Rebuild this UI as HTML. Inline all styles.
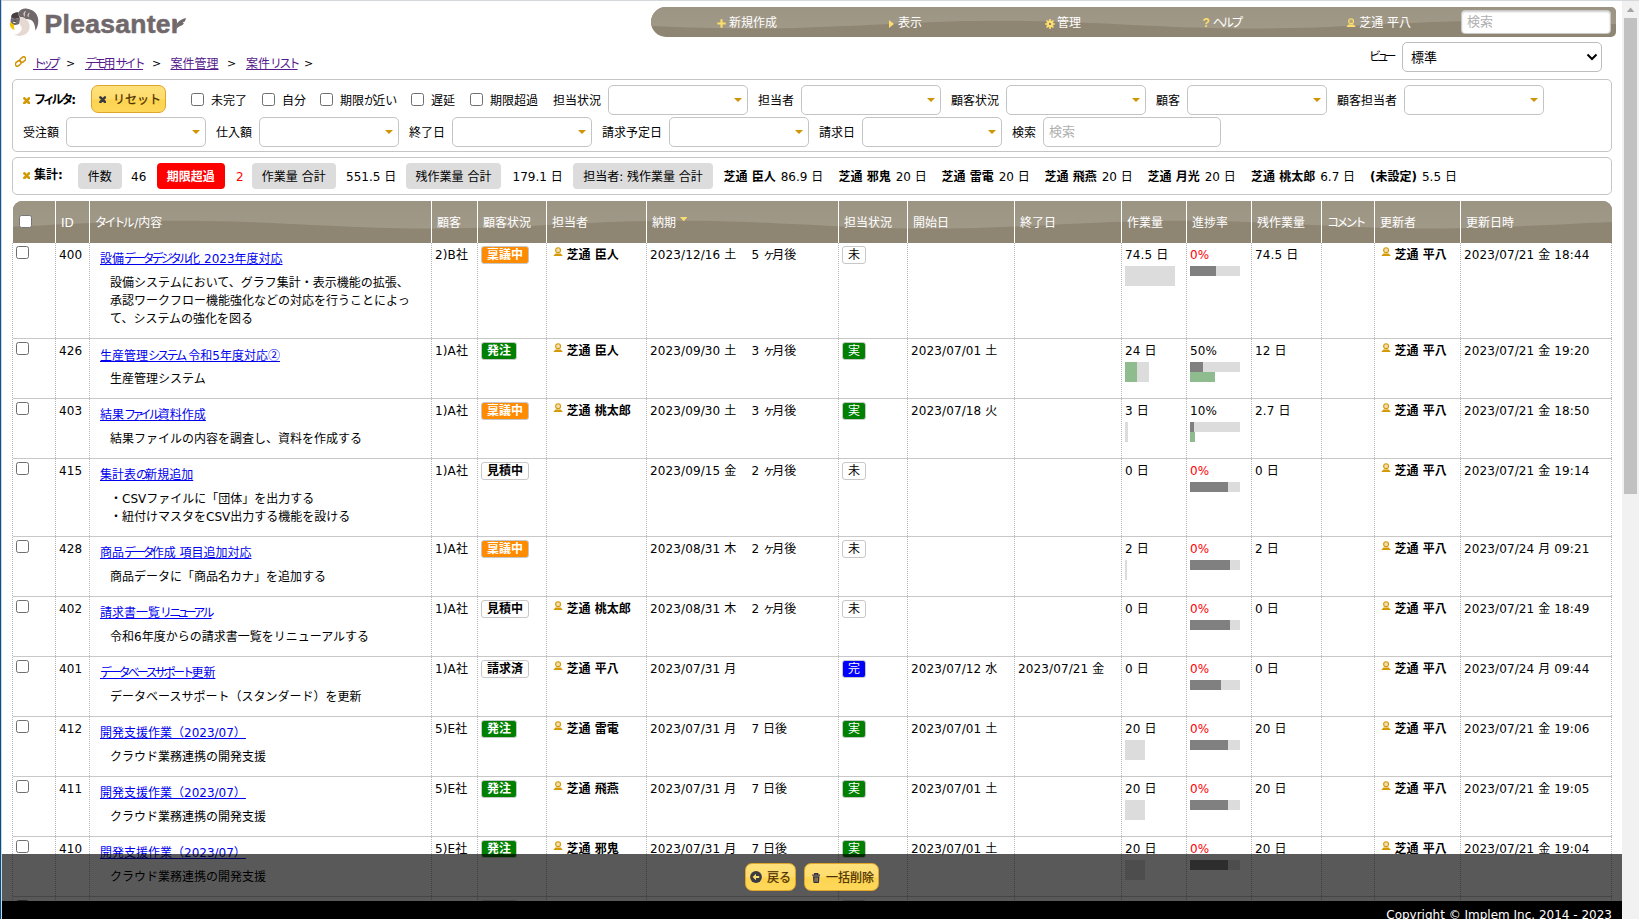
<!DOCTYPE html>
<html lang="ja"><head><meta charset="utf-8"><title>案件リスト - Pleasanter</title>
<style>
html,body{margin:0;padding:0;}
body{width:1639px;height:919px;overflow:hidden;position:relative;background:#fff;color:#000;
 font-family:"DejaVu Sans","Noto Sans CJK JP",sans-serif;font-size:12px;line-height:16px;}
.k{letter-spacing:-2.8px;}
b{font-weight:bold;}
.edge-l1{z-index:6;position:absolute;left:0;top:0;width:1px;height:919px;background:linear-gradient(#31507c,#17486b);}
.edge-l2{z-index:6;position:absolute;left:1px;top:0;width:1px;height:919px;background:#b9dcfa;}
.edge-t{position:absolute;left:2px;top:0;width:1637px;z-index:5;height:1px;background:#d6d9dc;}
#logo{position:absolute;left:0;top:0;height:44px;width:210px;}
#logo .bird{position:absolute;left:4px;top:4px;}
#logo .lt{position:absolute;left:44.6px;top:7px;font:bold 26.5px/34px "Liberation Sans",sans-serif;color:#70686b;letter-spacing:0.27px;-webkit-text-stroke:0.55px #70686b;white-space:nowrap;}
#logo .lt .r{display:inline-block;width:6px;overflow:hidden;vertical-align:bottom;}
#logo .leaf{position:absolute;left:175px;top:17px;}
#nav{position:absolute;left:651px;top:7px;width:965px;height:30px;background:#8e8573;border-radius:15px 5px 5px 15px;overflow:hidden;color:#fff;}
#nav .wave{position:absolute;left:0;top:0;}
.ni{position:absolute;top:8px;white-space:nowrap;line-height:16px;}
.ni svg{vertical-align:-1px;}
.ni .q{color:#fbde6b;font:bold 12px "Liberation Sans",sans-serif;margin-right:3px;}
.sbox{position:absolute;left:810px;top:3px;width:148px;height:22px;border:1px solid #c8c8c8;border-radius:4px;background:#fff;box-shadow:inset 0 1px 2px rgba(0,0,0,.2);}
.ph{color:#b0b0b0;font-size:13px;position:absolute;left:5px;top:3px;}
#bc{position:absolute;left:0;top:55px;height:18px;width:700px;}
#bc .lk{position:absolute;left:15px;top:0.5px;}
.bl{position:absolute;top:1px;color:#551a8b;text-decoration:underline;white-space:nowrap;}
.gt{position:absolute;top:1px;font-size:11px;}
#view{position:absolute;left:1360px;top:42px;height:30px;width:250px;}
#view .vl{position:absolute;left:9px;top:7px;white-space:nowrap;}
#view .vs{position:absolute;left:42px;top:0;width:198px;height:28px;border:1px solid #bdbdbd;border-radius:5px;background:#fff;}
#view .vt{position:absolute;left:8px;top:7px;font-size:13px;}
#view .vs svg{position:absolute;right:3.5px;top:10px;}
#filter{position:absolute;left:12px;top:79px;width:1598px;height:71px;border:1px solid #c5c5c5;border-radius:5px;background:#fff;}
#agg{position:absolute;left:12px;top:157px;width:1598px;height:36px;border:1px solid #c5c5c5;border-radius:5px;background:#fff;}
#filter>*,#agg>*{position:absolute;white-space:nowrap;}
#filter,#agg{--o:1px;}
.fh b{margin-left:3.5px;}
b .k{letter-spacing:-2.1px;}
b .s{letter-spacing:-3.6px;margin-left:-0.8px;}
.xi{vertical-align:0;}
.btn{position:absolute;box-sizing:border-box;border:1px solid #dfa428;border-radius:7px;background:linear-gradient(to bottom,#fee17c 0,#fedc6c 48%,#fdd450 54%,#fed85c 100%);color:#4c3000;}
.btn .bx{position:absolute;}
.btn .bt{position:absolute;left:21px;top:6px;white-space:nowrap;}
.cb{position:absolute;box-sizing:border-box;width:13px;height:13px;border:1px solid #6e6e6e;border-radius:2.5px;background:#fff;}
.fl{color:#000;}
.dd{box-sizing:border-box;width:140px;height:30px;border:1px solid #c4c4c4;border-radius:5px;background:#fff;}
.dd i{position:absolute;right:5px;top:12px;width:0;height:0;border-left:4px solid transparent;border-right:4px solid transparent;border-top:4.5px solid #d19405;}
.dd .ph{left:5px;top:6px;}
.ab{top:5px;height:26px;line-height:28px;text-align:center;background:#dcdcdc;border-radius:4px;}
.ab.red{background:#ff0000;color:#fff;font-weight:bold;}
.at{top:11px;}
.redt{color:#ff0000;}
#grid{position:absolute;left:13px;top:201px;width:1599px;height:718px;}
.gh{position:absolute;left:0;top:0;width:1599px;height:42px;background:#8e8573;border-radius:9px 9px 0 0;overflow:hidden;color:#fff;}
.gh .wave{position:absolute;left:0;top:0;}
.hc{position:absolute;top:0;height:42px;box-sizing:border-box;border-left:1px solid #fff;}
.hc:first-of-type{border-left:0;}
.ht{position:absolute;left:5px;top:14px;white-space:nowrap;}
.hcb{left:6px;top:14px;border-color:#767676;}
.sort{margin-left:4px;vertical-align:5.5px;}
.gr{position:absolute;left:0;width:1599px;box-sizing:border-box;border-bottom:1px solid #c8c8c8;}
.gc{position:absolute;top:0;bottom:0;box-sizing:border-box;border-left:1px dotted #b4b4b4;white-space:nowrap;}
.gc.last{border-right:1px dotted #b4b4b4;}
.ct{position:absolute;left:3px;top:4px;letter-spacing:0.12px;}
.rcb{left:3px;top:3px;}
.tl{position:absolute;left:10px;top:8px;color:#0000ee;text-decoration:underline;}
.md{position:absolute;left:20px;top:31px;font-family:"DejaVu Sans","Noto Sans CJK JP",sans-serif;line-height:18px;color:#000;}
.sb{position:absolute;left:3px;top:3px;box-sizing:border-box;height:18px;line-height:16px;padding:0 5px;border:1px solid #c8c8c8;border-radius:3px;font-weight:bold;background:#fff;}
.sb.orange{background:#ff8c00;color:#fff;}
.sb.green{background:#008000;color:#fff;}
.sb.blue{background:#0000ff;color:#fff;}
.pi{position:absolute;left:6px;top:3.6px;}
.ow{position:absolute;left:19.5px;top:4px;}
.rel{position:absolute;left:104.5px;top:4px;}
.wb{position:absolute;left:3px;top:23px;height:20px;background:#dcdcdc;}
.wb i{position:absolute;left:0;top:0;height:20px;background:#8fbc8f;}
.pb{position:absolute;left:3px;top:23px;width:50px;height:10px;background:#dcdcdc;}
.pb i{position:absolute;left:0;top:0;height:10px;background:#808080;}
.pg{position:absolute;left:3px;top:33px;height:10px;background:#8fbc8f;}
#cmd{position:absolute;left:0;top:854px;width:1622px;height:47px;background:rgba(0,0,0,.65);}
#cmd .btn{position:absolute;box-sizing:border-box;border:1px solid #dfa428;border-radius:7px;background:linear-gradient(to bottom,#fee17c 0,#fedc6c 48%,#fdd450 54%,#fed85c 100%);color:#4c3000;}
#foot{position:absolute;left:0;top:901px;width:1622px;height:18px;background:#000;color:#fff;}
#foot span{position:absolute;right:10px;top:6px;white-space:nowrap;font-size:12px;}
#sbar{position:absolute;left:1622px;top:0;width:17px;height:919px;background:#f1f1f1;}
#sbar .thumb{position:absolute;left:2px;top:18px;width:13px;height:476px;background:#c1c1c1;}

.sb.st{font-weight:normal;}
.btn .bt .k,.md .k{letter-spacing:0;}
.sl{margin-left:2.5px;}
.s{letter-spacing:-4.6px;margin-left:-1.2px;}
.btn .bt .s,.md .s{letter-spacing:0;margin-left:0;}
.btn .bt{-webkit-text-stroke:0.25px #4c3000;}
.cj{font-family:"Noto Sans CJK JP",sans-serif;}

</style></head>
<body>
<div class="edge-l1"></div><div class="edge-l2"></div><div class="edge-t"></div>
<div id="logo"><svg class="bird" viewBox="4 4 42 38" width="42" height="38">
<path d="M18.5 12.5 C20 9.5 23 8.3 26 8.5 C33 9 38.5 14 38.3 21 C38.2 25 37 28.5 35.4 30.5 C35.2 27 34.5 24.5 33.5 22.5 C32.5 20.8 31 19.7 29.5 19.5 C27.5 19.2 26 19.5 24.5 18.5 C23 17.5 21.5 16.8 20 17 C19 15.5 18.3 14 18.5 12.5 Z" fill="#70686b"/>
<path d="M11.2 17.5 C10.8 14.5 13.5 12 18.6 12.2 C18.3 14 18.6 16 19.8 17.5 C17 19.2 13 19.5 11.2 17.5 Z" fill="#4a4044"/>
<path d="M11.2 17.8 C13.5 19.3 17 19 19.7 17.2 C20.2 19 20 21 19.4 23.6 C18.5 24.7 16 25.2 13.5 24.7 C12 23.7 10.8 22.6 10.5 21.5 C10.5 20 10.8 19 11.2 17.8 Z" fill="#6f686c"/>
<path d="M20.3 17 C23 16.5 26.5 18.5 28.5 22 C30.5 26 30 30.5 26.5 33.5 C23 36.3 18 36.5 14 34.8 C17.5 34.5 20.5 32.8 21.6 29.5 C22.5 26.5 20 25.5 19.3 23.5 C19.9 21 20 19 20.3 17 Z" fill="#e5d9d1"/>
<path d="M10.3 22 C11.5 23.5 12.8 24.3 14.3 24.8 C13.6 26.3 13.8 28 14.8 29.6 C13 29.8 11.5 28.8 10.6 27 C9.6 25.2 9.5 23.5 10.3 22 Z" fill="#f2c300"/>
<ellipse cx="14.4" cy="22.4" rx="1.4" ry="0.65" fill="#f5eaa5"/><circle cx="15.2" cy="21.2" r="0.8" fill="#3d3850"/>
<path d="M26 10.8 C23 11.8 22.6 15.4 25 16.8 C24.6 14.8 24.9 12.6 26 10.8 Z M30 12.4 C27.2 13.3 26.8 16 28.6 17.4 C28.5 15.6 28.9 13.9 30 12.4 Z" fill="#d9cdc7"/>
</svg><span class="lt">Pleasante<span class="r">r</span></span><svg class="leaf" viewBox="0 0 12 13" width="12" height="13"><path d="M1.2 7.6 C2.6 4.8 5.6 2.3 11 0.9 C10.7 2.6 10.2 3.9 9.5 4.8 L7.5 5.5 L8.9 6.3 C8 7.8 7 8.6 5.5 9.1 C3.5 9.8 1.9 11 1.2 13 Z" fill="#70686b"/></svg></div>
<div id="nav"><svg class="wave" viewBox="0 0 965 30" preserveAspectRatio="none" width="965" height="30"><defs><filter id="bl965" x="-1%" y="-20%" width="102%" height="140%"><feGaussianBlur stdDeviation="0 0.6"/></filter><linearGradient id="lg965" x1="0" y1="0" x2="0" y2="1"><stop offset="0" stop-color="#9c9483"/><stop offset="1" stop-color="#a19988"/></linearGradient></defs><path filter="url(#bl965)" d="M0 -3 H965 L965 17.1 L962 16.9 L949 16.3 L936 15.7 L923 15.2 L910 14.7 L897 14.3 L884 14.0 L871 13.8 L858 13.7 L845 13.7 L832 13.8 L819 14.0 L806 14.3 L793 14.7 L780 15.1 L767 15.7 L754 16.2 L741 16.8 L728 17.5 L715 18.1 L702 18.7 L689 19.3 L676 19.9 L663 20.4 L650 20.8 L637 21.1 L624 21.3 L611 21.5 L598 21.5 L585 21.4 L572 21.3 L559 21.0 L546 20.6 L533 20.2 L520 19.7 L507 19.1 L494 18.5 L481 17.9 L468 17.2 L455 16.6 L442 16.0 L429 15.4 L416 14.9 L403 14.5 L390 14.2 L377 13.9 L364 13.8 L351 13.7 L338 13.7 L325 13.9 L312 14.1 L299 14.5 L286 14.9 L273 15.4 L260 16.0 L247 16.6 L234 17.2 L221 17.8 L208 18.5 L195 19.1 L182 19.6 L169 20.1 L156 20.6 L143 21.0 L130 21.2 L117 21.4 L104 21.5 L91 21.5 L78 21.3 L65 21.1 L52 20.8 L39 20.4 L26 19.9 L13 19.4 L0 18.8 Z" fill="url(#lg965)"/></svg>
<span class="ni" style="left:66px"><svg viewBox="0 0 9 9" width="9" height="9" style="margin-right:3px;vertical-align:-1px"><path d="M4.5 0.3 V8.7 M0.3 4.5 H8.7" stroke="#fbde6b" stroke-width="2.1"/></svg>新規作成</span>
<span class="ni" style="left:238px"><svg viewBox="0 0 5 8" width="5" height="8" style="margin-right:4px"><path d="M0 0 L5 4 L0 8 Z" fill="#fbde6b"/></svg>表示</span>
<span class="ni" style="left:394px"><svg viewBox="0 0 10 10" width="10" height="10" style="margin-right:2px;vertical-align:-1.5px"><path fill-rule="evenodd" d="M9.89 4.23 L9.89 5.77 L8.40 5.82 L7.98 6.83 L9.00 7.91 L7.91 9.00 L6.83 7.98 L5.82 8.40 L5.77 9.89 L4.23 9.89 L4.18 8.40 L3.17 7.98 L2.09 9.00 L1.00 7.91 L2.02 6.83 L1.60 5.82 L0.11 5.77 L0.11 4.23 L1.60 4.18 L2.02 3.17 L1.00 2.09 L2.09 1.00 L3.17 2.02 L4.18 1.60 L4.23 0.11 L5.77 0.11 L5.82 1.60 L6.83 2.02 L7.91 1.00 L9.00 2.09 L7.98 3.17 L8.40 4.18 Z M4 4 H6 V6 H4 Z" fill="#fbde6b"/></svg>管理</span>
<span class="ni" style="left:551.5px"><b class="q">?</b><span class="k">ヘルプ</span></span>
<span class="ni" style="left:695px"><svg viewBox="0 0 10.2 9.4" width="10.2" height="9.4" style="margin-right:3px;vertical-align:0px"><circle cx="5.1" cy="3.2" r="2.45" fill="#b7a77d" stroke="#fbde6b" stroke-width="1.1"/><path d="M0 9.4 L2.4 6.5 L7.8 6.5 L10.2 9.4 Z" fill="#fbde6b"/></svg>芝通 平八</span>
<span class="sbox"><span class="ph">検索</span></span></div>
<div id="bc"><svg class="lk" viewBox="0 0 11 11" width="11" height="11"><g transform="rotate(-40 5.5 5.5)" fill="none" stroke="#d19405" stroke-width="1.5"><rect x="-0.6" y="3.5" width="6.2" height="4" rx="2"/><rect x="5.4" y="3.5" width="6.2" height="4" rx="2"/></g></svg><a class="bl" style="left:33px"><span class="k">ト<span class="s">ッ</span>プ</span></a><a class="bl" style="left:85px"><span class="k">デモ</span>用<span class="k">サイト</span></a><a class="bl" style="left:170.5px">案件管理</a><a class="bl" style="left:246px">案件<span class="k">リスト</span></a><span class="gt" style="left:66px">&gt;</span><span class="gt" style="left:152px">&gt;</span><span class="gt" style="left:227px">&gt;</span><span class="gt" style="left:304px">&gt;</span></div>
<div id="view"><span class="vl"><span class="k">ビ<span class="s">ュ</span>ー</span></span><span class="vs"><span class="vt">標準</span><svg viewBox="0 0 12 8" width="12" height="8"><path d="M1.5 1.5 L6 6 L10.5 1.5" fill="none" stroke="#000" stroke-width="2"/></svg></span></div>
<div id="filter">
<span class="fh" style="left:10px;top:12px"><svg class="xi" viewBox="0 0 7.4 7.4" width="7.4" height="7.4"><path d="M1.4 1.4 L6 6 M6 1.4 L1.4 6" stroke="#d39a08" stroke-width="2.7" stroke-linecap="round" fill="none"/></svg><b><span class="k">フ<span class="s">ィ</span>ルタ</span>:</b></span>
<span class="btn" style="left:78px;top:5px;width:75px;height:28px"><svg viewBox="0 0 7.4 7.4" width="7.4" height="7.4" class="bx" style="left:7px;top:9.5px"><path d="M1.4 1.4 L6 6 M6 1.4 L1.4 6" stroke="#3a3a42" stroke-width="2.5" stroke-linecap="round" fill="none"/></svg><span class="bt"><span class="k">リセ<span class="s">ッ</span>ト</span></span></span>
<span class="cb" style="left:178px;top:13px"></span><span class="fl" style="left:198px;top:13px">未完了</span>
<span class="cb" style="left:249px;top:13px"></span><span class="fl" style="left:269px;top:13px">自分</span>
<span class="cb" style="left:307px;top:13px"></span><span class="fl" style="left:327px;top:13px">期限<span class="k">が</span>近<span class="k">い</span></span>
<span class="cb" style="left:398px;top:13px"></span><span class="fl" style="left:418px;top:13px">遅延</span>
<span class="cb" style="left:457px;top:13px"></span><span class="fl" style="left:477px;top:13px">期限超過</span>
<span class="fl" style="left:540px;top:13px">担当状況</span><span class="dd" style="left:595px;top:5px"><i></i></span>
<span class="fl" style="left:745px;top:13px">担当者</span><span class="dd" style="left:788px;top:5px"><i></i></span>
<span class="fl" style="left:938px;top:13px">顧客状況</span><span class="dd" style="left:993px;top:5px"><i></i></span>
<span class="fl" style="left:1143px;top:13px">顧客</span><span class="dd" style="left:1174px;top:5px"><i></i></span>
<span class="fl" style="left:1324px;top:13px">顧客担当者</span><span class="dd" style="left:1391px;top:5px"><i></i></span>
<span class="fl" style="left:10px;top:45px">受注額</span><span class="dd" style="left:53px;top:37px"><i></i></span>
<span class="fl" style="left:203px;top:45px">仕入額</span><span class="dd" style="left:246px;top:37px"><i></i></span>
<span class="fl" style="left:396px;top:45px">終了日</span><span class="dd" style="left:439px;top:37px"><i></i></span>
<span class="fl" style="left:589px;top:45px">請求予定日</span><span class="dd" style="left:656px;top:37px"><i></i></span>
<span class="fl" style="left:806px;top:45px">請求日</span><span class="dd" style="left:849px;top:37px"><i></i></span>
<span class="fl" style="left:999px;top:45px">検索</span><span class="dd tx" style="left:1030px;top:37px;width:178px"><span class="ph">検索</span></span>
</div>
<div id="agg">
<span class="fh" style="left:10px;top:9px"><svg class="xi" viewBox="0 0 7.4 7.4" width="7.4" height="7.4"><path d="M1.4 1.4 L6 6 M6 1.4 L1.4 6" stroke="#d39a08" stroke-width="2.7" stroke-linecap="round" fill="none"/></svg><b>集計:</b></span>
<span class="ab " style="left:65px;width:43.5px">件数</span>
<span class="at " style="left:118px">46</span>
<span class="ab red" style="left:144px;width:67.5px">期限超過</span>
<span class="at redt" style="left:223px">2</span>
<span class="ab " style="left:239px;width:83.5px">作業量 合計</span>
<span class="at " style="left:333px">551.5 日</span>
<span class="ab " style="left:393px;width:95px">残作業量 合計</span>
<span class="at " style="left:499.5px">179.1 日</span>
<span class="ab " style="left:560px;width:140px">担当者: 残作業量 合計</span>
<span class="at " style="left:710.5px"><b>芝通 臣人</b><span style="margin-left:5px">86.9 日</span></span>
<span class="at " style="left:825.5px"><b>芝通 邪鬼</b><span style="margin-left:5px">20 日</span></span>
<span class="at " style="left:928.5px"><b>芝通 雷電</b><span style="margin-left:5px">20 日</span></span>
<span class="at " style="left:1031.5px"><b>芝通 飛燕</b><span style="margin-left:5px">20 日</span></span>
<span class="at " style="left:1134.5px"><b>芝通 月光</b><span style="margin-left:5px">20 日</span></span>
<span class="at " style="left:1238px"><b>芝通 桃太郎</b><span style="margin-left:5px">6.7 日</span></span>
<span class="at " style="left:1357px"><b>(未設定)</b><span style="margin-left:5px">5.5 日</span></span>
</div>
<div id="grid">
<div class="gh"><svg class="wave" viewBox="0 0 1599 42" preserveAspectRatio="none" width="1599" height="42"><defs><filter id="bl1599" x="-1%" y="-20%" width="102%" height="140%"><feGaussianBlur stdDeviation="0 0.6"/></filter><linearGradient id="lg1599" x1="0" y1="0" x2="0" y2="1"><stop offset="0" stop-color="#9c9483"/><stop offset="1" stop-color="#a19988"/></linearGradient></defs><path filter="url(#bl1599)" d="M0 -3 H1599 L1599 21.1 L1586 21.6 L1573 22.1 L1560 22.7 L1547 23.4 L1534 24.0 L1521 24.6 L1508 25.2 L1495 25.8 L1482 26.3 L1469 26.7 L1456 27.1 L1443 27.3 L1430 27.5 L1417 27.5 L1404 27.4 L1391 27.3 L1378 27.0 L1365 26.7 L1352 26.3 L1339 25.8 L1326 25.2 L1313 24.6 L1300 24.0 L1287 23.3 L1274 22.7 L1261 22.1 L1248 21.5 L1235 21.0 L1222 20.6 L1209 20.2 L1196 19.9 L1183 19.8 L1170 19.7 L1157 19.7 L1144 19.9 L1131 20.1 L1118 20.4 L1105 20.8 L1092 21.3 L1079 21.9 L1066 22.5 L1053 23.1 L1040 23.7 L1027 24.4 L1014 25.0 L1001 25.5 L988 26.1 L975 26.5 L962 26.9 L949 27.2 L936 27.4 L923 27.5 L910 27.5 L897 27.4 L884 27.2 L871 26.9 L858 26.5 L845 26.0 L832 25.5 L819 24.9 L806 24.3 L793 23.6 L780 23.0 L767 22.4 L754 21.8 L741 21.2 L728 20.8 L715 20.4 L702 20.1 L689 19.8 L676 19.7 L663 19.7 L650 19.8 L637 20.0 L624 20.3 L611 20.6 L598 21.1 L585 21.6 L572 22.2 L559 22.8 L546 23.4 L533 24.1 L520 24.7 L507 25.3 L494 25.8 L481 26.3 L468 26.7 L455 27.1 L442 27.3 L429 27.5 L416 27.5 L403 27.4 L390 27.3 L377 27.0 L364 26.7 L351 26.2 L338 25.7 L325 25.1 L312 24.5 L299 23.9 L286 23.3 L273 22.7 L260 22.1 L247 21.5 L234 21.0 L221 20.5 L208 20.2 L195 19.9 L182 19.8 L169 19.7 L156 19.7 L143 19.9 L130 20.1 L117 20.5 L104 20.9 L91 21.4 L78 21.9 L65 22.5 L52 23.1 L39 23.8 L26 24.4 L13 25.0 L0 25.6 Z" fill="url(#lg1599)"/></svg>
<span class="hc" style="left:0;width:42px"><span class="cb hcb"></span></span>
<span class="hc" style="left:42px;width:34px"><span class="ht">ID</span></span>
<span class="hc" style="left:76px;width:342px"><span class="ht"><span class="k">タイトル</span><span class="sl">/</span>内容</span></span>
<span class="hc" style="left:418px;width:46px"><span class="ht">顧客</span></span>
<span class="hc" style="left:464px;width:69px"><span class="ht">顧客状況</span></span>
<span class="hc" style="left:533px;width:100px"><span class="ht">担当者</span></span>
<span class="hc" style="left:633px;width:192px"><span class="ht">納期<svg viewBox="0 0 7.4 4.2" width="7.4" height="4.2" class="sort"><path d="M0 0 H7.4 L3.7 4.2 Z" fill="#fbde6b"/></svg></span></span>
<span class="hc" style="left:825px;width:69px"><span class="ht">担当状況</span></span>
<span class="hc" style="left:894px;width:107px"><span class="ht">開始日</span></span>
<span class="hc" style="left:1001px;width:107px"><span class="ht">終了日</span></span>
<span class="hc" style="left:1108px;width:65px"><span class="ht">作業量</span></span>
<span class="hc" style="left:1173px;width:65px"><span class="ht">進捗率</span></span>
<span class="hc" style="left:1238px;width:70px"><span class="ht">残作業量</span></span>
<span class="hc" style="left:1308px;width:53px"><span class="ht"><span class="k">コメント</span></span></span>
<span class="hc" style="left:1361px;width:86px"><span class="ht">更新者</span></span>
<span class="hc" style="left:1447px;width:152px"><span class="ht">更新日時</span></span>
</div>
<div class="gr" style="top:42px;height:96px">
<div class="gc " style="left:-1px;width:43px;padding-left:1px"><span class="cb rcb"></span></div>
<div class="gc " style="left:42px;width:34px"><span class="ct">400</span></div>
<div class="gc " style="left:76px;width:342px"><a class="tl">設備<span class="k">データデジタル</span>化 2023年度対応</a><div class="md"><div>設備システムにおいて、グラフ集計・表示機能の拡張、</div><div>承認ワークフロー機能強化などの対応を行うことによっ</div><div>て、システムの強化を図る</div></div></div>
<div class="gc " style="left:418px;width:46px"><span class="ct">2)B社</span></div>
<div class="gc " style="left:464px;width:69px"><span class="sb orange">稟議中</span></div>
<div class="gc " style="left:533px;width:100px"><svg class="pi" viewBox="0 0 10.2 9.4" width="10.2" height="9.4"><circle cx="5.1" cy="3.2" r="2.45" fill="#f3deb0" stroke="#d49a05" stroke-width="1.1"/><path d="M0 9.4 L2.4 6.5 L7.8 6.5 L10.2 9.4 Z" fill="#d49a05"/></svg><b class="ow">芝通 臣人</b></div>
<div class="gc " style="left:633px;width:192px"><span class="ct">2023/12/16 土</span><span class="rel">5 <span class="k">ヶ</span>月後</span></div>
<div class="gc " style="left:825px;width:69px"><span class="sb st white">未</span></div>
<div class="gc " style="left:894px;width:107px"><span class="ct"></span></div>
<div class="gc " style="left:1001px;width:107px"><span class="ct"></span></div>
<div class="gc " style="left:1108px;width:65px"><span class="ct">74.5 日</span><span class="wb" style="width:50px"><i style="width:0px"></i></span></div>
<div class="gc " style="left:1173px;width:65px"><span class="ct redt">0%</span><span class="pb"><i style="width:26px"></i></span></div>
<div class="gc " style="left:1238px;width:70px"><span class="ct">74.5 日</span></div>
<div class="gc " style="left:1308px;width:53px"></div>
<div class="gc " style="left:1361px;width:86px"><svg class="pi" viewBox="0 0 10.2 9.4" width="10.2" height="9.4"><circle cx="5.1" cy="3.2" r="2.45" fill="#f3deb0" stroke="#d49a05" stroke-width="1.1"/><path d="M0 9.4 L2.4 6.5 L7.8 6.5 L10.2 9.4 Z" fill="#d49a05"/></svg><b class="ow">芝通 平八</b></div>
<div class="gc last" style="left:1447px;width:152px"><span class="ct">2023/07/21 金 18:44</span></div>
</div>
<div class="gr" style="top:138px;height:60px">
<div class="gc " style="left:-1px;width:43px;padding-left:1px"><span class="cb rcb"></span></div>
<div class="gc " style="left:42px;width:34px"><span class="ct">426</span></div>
<div class="gc " style="left:76px;width:342px"><a class="tl">生産管理<span class="k">システム</span> 令和5年度対応<span class="cj">②</span></a><div class="md"><div>生産管理システム</div></div></div>
<div class="gc " style="left:418px;width:46px"><span class="ct">1)A社</span></div>
<div class="gc " style="left:464px;width:69px"><span class="sb green">発注</span></div>
<div class="gc " style="left:533px;width:100px"><svg class="pi" viewBox="0 0 10.2 9.4" width="10.2" height="9.4"><circle cx="5.1" cy="3.2" r="2.45" fill="#f3deb0" stroke="#d49a05" stroke-width="1.1"/><path d="M0 9.4 L2.4 6.5 L7.8 6.5 L10.2 9.4 Z" fill="#d49a05"/></svg><b class="ow">芝通 臣人</b></div>
<div class="gc " style="left:633px;width:192px"><span class="ct">2023/09/30 土</span><span class="rel">3 <span class="k">ヶ</span>月後</span></div>
<div class="gc " style="left:825px;width:69px"><span class="sb st green">実</span></div>
<div class="gc " style="left:894px;width:107px"><span class="ct">2023/07/01 土</span></div>
<div class="gc " style="left:1001px;width:107px"><span class="ct"></span></div>
<div class="gc " style="left:1108px;width:65px"><span class="ct">24 日</span><span class="wb" style="width:24px"><i style="width:12px"></i></span></div>
<div class="gc " style="left:1173px;width:65px"><span class="ct ">50%</span><span class="pb"><i style="width:13px"></i></span><span class="pg" style="width:25px"></span></div>
<div class="gc " style="left:1238px;width:70px"><span class="ct">12 日</span></div>
<div class="gc " style="left:1308px;width:53px"></div>
<div class="gc " style="left:1361px;width:86px"><svg class="pi" viewBox="0 0 10.2 9.4" width="10.2" height="9.4"><circle cx="5.1" cy="3.2" r="2.45" fill="#f3deb0" stroke="#d49a05" stroke-width="1.1"/><path d="M0 9.4 L2.4 6.5 L7.8 6.5 L10.2 9.4 Z" fill="#d49a05"/></svg><b class="ow">芝通 平八</b></div>
<div class="gc last" style="left:1447px;width:152px"><span class="ct">2023/07/21 金 19:20</span></div>
</div>
<div class="gr" style="top:198px;height:60px">
<div class="gc " style="left:-1px;width:43px;padding-left:1px"><span class="cb rcb"></span></div>
<div class="gc " style="left:42px;width:34px"><span class="ct">403</span></div>
<div class="gc " style="left:76px;width:342px"><a class="tl">結果<span class="k">フ<span class="s">ァ</span>イル</span>資料作成</a><div class="md"><div>結果ファイルの内容を調査し、資料を作成する</div></div></div>
<div class="gc " style="left:418px;width:46px"><span class="ct">1)A社</span></div>
<div class="gc " style="left:464px;width:69px"><span class="sb orange">稟議中</span></div>
<div class="gc " style="left:533px;width:100px"><svg class="pi" viewBox="0 0 10.2 9.4" width="10.2" height="9.4"><circle cx="5.1" cy="3.2" r="2.45" fill="#f3deb0" stroke="#d49a05" stroke-width="1.1"/><path d="M0 9.4 L2.4 6.5 L7.8 6.5 L10.2 9.4 Z" fill="#d49a05"/></svg><b class="ow">芝通 桃太郎</b></div>
<div class="gc " style="left:633px;width:192px"><span class="ct">2023/09/30 土</span><span class="rel">3 <span class="k">ヶ</span>月後</span></div>
<div class="gc " style="left:825px;width:69px"><span class="sb st green">実</span></div>
<div class="gc " style="left:894px;width:107px"><span class="ct">2023/07/18 火</span></div>
<div class="gc " style="left:1001px;width:107px"><span class="ct"></span></div>
<div class="gc " style="left:1108px;width:65px"><span class="ct">3 日</span><span class="wb" style="width:3px"><i style="width:0px"></i></span></div>
<div class="gc " style="left:1173px;width:65px"><span class="ct ">10%</span><span class="pb"><i style="width:4px"></i></span><span class="pg" style="width:5px"></span></div>
<div class="gc " style="left:1238px;width:70px"><span class="ct">2.7 日</span></div>
<div class="gc " style="left:1308px;width:53px"></div>
<div class="gc " style="left:1361px;width:86px"><svg class="pi" viewBox="0 0 10.2 9.4" width="10.2" height="9.4"><circle cx="5.1" cy="3.2" r="2.45" fill="#f3deb0" stroke="#d49a05" stroke-width="1.1"/><path d="M0 9.4 L2.4 6.5 L7.8 6.5 L10.2 9.4 Z" fill="#d49a05"/></svg><b class="ow">芝通 平八</b></div>
<div class="gc last" style="left:1447px;width:152px"><span class="ct">2023/07/21 金 18:50</span></div>
</div>
<div class="gr" style="top:258px;height:78px">
<div class="gc " style="left:-1px;width:43px;padding-left:1px"><span class="cb rcb"></span></div>
<div class="gc " style="left:42px;width:34px"><span class="ct">415</span></div>
<div class="gc " style="left:76px;width:342px"><a class="tl">集計表<span class="k">の</span>新規追加</a><div class="md"><div>・CSVファイルに「団体」を出力する</div><div>・紐付けマスタをCSV出力する機能を設ける</div></div></div>
<div class="gc " style="left:418px;width:46px"><span class="ct">1)A社</span></div>
<div class="gc " style="left:464px;width:69px"><span class="sb white">見積中</span></div>
<div class="gc " style="left:533px;width:100px"></div>
<div class="gc " style="left:633px;width:192px"><span class="ct">2023/09/15 金</span><span class="rel">2 <span class="k">ヶ</span>月後</span></div>
<div class="gc " style="left:825px;width:69px"><span class="sb st white">未</span></div>
<div class="gc " style="left:894px;width:107px"><span class="ct"></span></div>
<div class="gc " style="left:1001px;width:107px"><span class="ct"></span></div>
<div class="gc " style="left:1108px;width:65px"><span class="ct">0 日</span></div>
<div class="gc " style="left:1173px;width:65px"><span class="ct redt">0%</span><span class="pb"><i style="width:38px"></i></span></div>
<div class="gc " style="left:1238px;width:70px"><span class="ct">0 日</span></div>
<div class="gc " style="left:1308px;width:53px"></div>
<div class="gc " style="left:1361px;width:86px"><svg class="pi" viewBox="0 0 10.2 9.4" width="10.2" height="9.4"><circle cx="5.1" cy="3.2" r="2.45" fill="#f3deb0" stroke="#d49a05" stroke-width="1.1"/><path d="M0 9.4 L2.4 6.5 L7.8 6.5 L10.2 9.4 Z" fill="#d49a05"/></svg><b class="ow">芝通 平八</b></div>
<div class="gc last" style="left:1447px;width:152px"><span class="ct">2023/07/21 金 19:14</span></div>
</div>
<div class="gr" style="top:336px;height:60px">
<div class="gc " style="left:-1px;width:43px;padding-left:1px"><span class="cb rcb"></span></div>
<div class="gc " style="left:42px;width:34px"><span class="ct">428</span></div>
<div class="gc " style="left:76px;width:342px"><a class="tl">商品<span class="k">データ</span>作成 項目追加対応</a><div class="md"><div>商品データに「商品名カナ」を追加する</div></div></div>
<div class="gc " style="left:418px;width:46px"><span class="ct">1)A社</span></div>
<div class="gc " style="left:464px;width:69px"><span class="sb orange">稟議中</span></div>
<div class="gc " style="left:533px;width:100px"></div>
<div class="gc " style="left:633px;width:192px"><span class="ct">2023/08/31 木</span><span class="rel">2 <span class="k">ヶ</span>月後</span></div>
<div class="gc " style="left:825px;width:69px"><span class="sb st white">未</span></div>
<div class="gc " style="left:894px;width:107px"><span class="ct"></span></div>
<div class="gc " style="left:1001px;width:107px"><span class="ct"></span></div>
<div class="gc " style="left:1108px;width:65px"><span class="ct">2 日</span><span class="wb" style="width:2px"><i style="width:0px"></i></span></div>
<div class="gc " style="left:1173px;width:65px"><span class="ct redt">0%</span><span class="pb"><i style="width:40px"></i></span></div>
<div class="gc " style="left:1238px;width:70px"><span class="ct">2 日</span></div>
<div class="gc " style="left:1308px;width:53px"></div>
<div class="gc " style="left:1361px;width:86px"><svg class="pi" viewBox="0 0 10.2 9.4" width="10.2" height="9.4"><circle cx="5.1" cy="3.2" r="2.45" fill="#f3deb0" stroke="#d49a05" stroke-width="1.1"/><path d="M0 9.4 L2.4 6.5 L7.8 6.5 L10.2 9.4 Z" fill="#d49a05"/></svg><b class="ow">芝通 平八</b></div>
<div class="gc last" style="left:1447px;width:152px"><span class="ct">2023/07/24 月 09:21</span></div>
</div>
<div class="gr" style="top:396px;height:60px">
<div class="gc " style="left:-1px;width:43px;padding-left:1px"><span class="cb rcb"></span></div>
<div class="gc " style="left:42px;width:34px"><span class="ct">402</span></div>
<div class="gc " style="left:76px;width:342px"><a class="tl">請求書一覧<span class="k">リニ<span class="s">ュ</span>ーアル</span></a><div class="md"><div>令和6年度からの請求書一覧をリニューアルする</div></div></div>
<div class="gc " style="left:418px;width:46px"><span class="ct">1)A社</span></div>
<div class="gc " style="left:464px;width:69px"><span class="sb white">見積中</span></div>
<div class="gc " style="left:533px;width:100px"><svg class="pi" viewBox="0 0 10.2 9.4" width="10.2" height="9.4"><circle cx="5.1" cy="3.2" r="2.45" fill="#f3deb0" stroke="#d49a05" stroke-width="1.1"/><path d="M0 9.4 L2.4 6.5 L7.8 6.5 L10.2 9.4 Z" fill="#d49a05"/></svg><b class="ow">芝通 桃太郎</b></div>
<div class="gc " style="left:633px;width:192px"><span class="ct">2023/08/31 木</span><span class="rel">2 <span class="k">ヶ</span>月後</span></div>
<div class="gc " style="left:825px;width:69px"><span class="sb st white">未</span></div>
<div class="gc " style="left:894px;width:107px"><span class="ct"></span></div>
<div class="gc " style="left:1001px;width:107px"><span class="ct"></span></div>
<div class="gc " style="left:1108px;width:65px"><span class="ct">0 日</span></div>
<div class="gc " style="left:1173px;width:65px"><span class="ct redt">0%</span><span class="pb"><i style="width:40px"></i></span></div>
<div class="gc " style="left:1238px;width:70px"><span class="ct">0 日</span></div>
<div class="gc " style="left:1308px;width:53px"></div>
<div class="gc " style="left:1361px;width:86px"><svg class="pi" viewBox="0 0 10.2 9.4" width="10.2" height="9.4"><circle cx="5.1" cy="3.2" r="2.45" fill="#f3deb0" stroke="#d49a05" stroke-width="1.1"/><path d="M0 9.4 L2.4 6.5 L7.8 6.5 L10.2 9.4 Z" fill="#d49a05"/></svg><b class="ow">芝通 平八</b></div>
<div class="gc last" style="left:1447px;width:152px"><span class="ct">2023/07/21 金 18:49</span></div>
</div>
<div class="gr" style="top:456px;height:60px">
<div class="gc " style="left:-1px;width:43px;padding-left:1px"><span class="cb rcb"></span></div>
<div class="gc " style="left:42px;width:34px"><span class="ct">401</span></div>
<div class="gc " style="left:76px;width:342px"><a class="tl"><span class="k">データベースサポート</span>更新</a><div class="md"><div>データベースサポート（スタンダード）を更新</div></div></div>
<div class="gc " style="left:418px;width:46px"><span class="ct">1)A社</span></div>
<div class="gc " style="left:464px;width:69px"><span class="sb white">請求済</span></div>
<div class="gc " style="left:533px;width:100px"><svg class="pi" viewBox="0 0 10.2 9.4" width="10.2" height="9.4"><circle cx="5.1" cy="3.2" r="2.45" fill="#f3deb0" stroke="#d49a05" stroke-width="1.1"/><path d="M0 9.4 L2.4 6.5 L7.8 6.5 L10.2 9.4 Z" fill="#d49a05"/></svg><b class="ow">芝通 平八</b></div>
<div class="gc " style="left:633px;width:192px"><span class="ct">2023/07/31 月</span></div>
<div class="gc " style="left:825px;width:69px"><span class="sb st blue">完</span></div>
<div class="gc " style="left:894px;width:107px"><span class="ct">2023/07/12 水</span></div>
<div class="gc " style="left:1001px;width:107px"><span class="ct">2023/07/21 金</span></div>
<div class="gc " style="left:1108px;width:65px"><span class="ct">0 日</span></div>
<div class="gc " style="left:1173px;width:65px"><span class="ct redt">0%</span><span class="pb"><i style="width:31px"></i></span></div>
<div class="gc " style="left:1238px;width:70px"><span class="ct">0 日</span></div>
<div class="gc " style="left:1308px;width:53px"></div>
<div class="gc " style="left:1361px;width:86px"><svg class="pi" viewBox="0 0 10.2 9.4" width="10.2" height="9.4"><circle cx="5.1" cy="3.2" r="2.45" fill="#f3deb0" stroke="#d49a05" stroke-width="1.1"/><path d="M0 9.4 L2.4 6.5 L7.8 6.5 L10.2 9.4 Z" fill="#d49a05"/></svg><b class="ow">芝通 平八</b></div>
<div class="gc last" style="left:1447px;width:152px"><span class="ct">2023/07/24 月 09:44</span></div>
</div>
<div class="gr" style="top:516px;height:60px">
<div class="gc " style="left:-1px;width:43px;padding-left:1px"><span class="cb rcb"></span></div>
<div class="gc " style="left:42px;width:34px"><span class="ct">412</span></div>
<div class="gc " style="left:76px;width:342px"><a class="tl">開発支援作業（2023/07）</a><div class="md"><div>クラウド業務連携の開発支援</div></div></div>
<div class="gc " style="left:418px;width:46px"><span class="ct">5)E社</span></div>
<div class="gc " style="left:464px;width:69px"><span class="sb green">発注</span></div>
<div class="gc " style="left:533px;width:100px"><svg class="pi" viewBox="0 0 10.2 9.4" width="10.2" height="9.4"><circle cx="5.1" cy="3.2" r="2.45" fill="#f3deb0" stroke="#d49a05" stroke-width="1.1"/><path d="M0 9.4 L2.4 6.5 L7.8 6.5 L10.2 9.4 Z" fill="#d49a05"/></svg><b class="ow">芝通 雷電</b></div>
<div class="gc " style="left:633px;width:192px"><span class="ct">2023/07/31 月</span><span class="rel">7 日後</span></div>
<div class="gc " style="left:825px;width:69px"><span class="sb st green">実</span></div>
<div class="gc " style="left:894px;width:107px"><span class="ct">2023/07/01 土</span></div>
<div class="gc " style="left:1001px;width:107px"><span class="ct"></span></div>
<div class="gc " style="left:1108px;width:65px"><span class="ct">20 日</span><span class="wb" style="width:20px"><i style="width:0px"></i></span></div>
<div class="gc " style="left:1173px;width:65px"><span class="ct redt">0%</span><span class="pb"><i style="width:38px"></i></span></div>
<div class="gc " style="left:1238px;width:70px"><span class="ct">20 日</span></div>
<div class="gc " style="left:1308px;width:53px"></div>
<div class="gc " style="left:1361px;width:86px"><svg class="pi" viewBox="0 0 10.2 9.4" width="10.2" height="9.4"><circle cx="5.1" cy="3.2" r="2.45" fill="#f3deb0" stroke="#d49a05" stroke-width="1.1"/><path d="M0 9.4 L2.4 6.5 L7.8 6.5 L10.2 9.4 Z" fill="#d49a05"/></svg><b class="ow">芝通 平八</b></div>
<div class="gc last" style="left:1447px;width:152px"><span class="ct">2023/07/21 金 19:06</span></div>
</div>
<div class="gr" style="top:576px;height:60px">
<div class="gc " style="left:-1px;width:43px;padding-left:1px"><span class="cb rcb"></span></div>
<div class="gc " style="left:42px;width:34px"><span class="ct">411</span></div>
<div class="gc " style="left:76px;width:342px"><a class="tl">開発支援作業（2023/07）</a><div class="md"><div>クラウド業務連携の開発支援</div></div></div>
<div class="gc " style="left:418px;width:46px"><span class="ct">5)E社</span></div>
<div class="gc " style="left:464px;width:69px"><span class="sb green">発注</span></div>
<div class="gc " style="left:533px;width:100px"><svg class="pi" viewBox="0 0 10.2 9.4" width="10.2" height="9.4"><circle cx="5.1" cy="3.2" r="2.45" fill="#f3deb0" stroke="#d49a05" stroke-width="1.1"/><path d="M0 9.4 L2.4 6.5 L7.8 6.5 L10.2 9.4 Z" fill="#d49a05"/></svg><b class="ow">芝通 飛燕</b></div>
<div class="gc " style="left:633px;width:192px"><span class="ct">2023/07/31 月</span><span class="rel">7 日後</span></div>
<div class="gc " style="left:825px;width:69px"><span class="sb st green">実</span></div>
<div class="gc " style="left:894px;width:107px"><span class="ct">2023/07/01 土</span></div>
<div class="gc " style="left:1001px;width:107px"><span class="ct"></span></div>
<div class="gc " style="left:1108px;width:65px"><span class="ct">20 日</span><span class="wb" style="width:20px"><i style="width:0px"></i></span></div>
<div class="gc " style="left:1173px;width:65px"><span class="ct redt">0%</span><span class="pb"><i style="width:38px"></i></span></div>
<div class="gc " style="left:1238px;width:70px"><span class="ct">20 日</span></div>
<div class="gc " style="left:1308px;width:53px"></div>
<div class="gc " style="left:1361px;width:86px"><svg class="pi" viewBox="0 0 10.2 9.4" width="10.2" height="9.4"><circle cx="5.1" cy="3.2" r="2.45" fill="#f3deb0" stroke="#d49a05" stroke-width="1.1"/><path d="M0 9.4 L2.4 6.5 L7.8 6.5 L10.2 9.4 Z" fill="#d49a05"/></svg><b class="ow">芝通 平八</b></div>
<div class="gc last" style="left:1447px;width:152px"><span class="ct">2023/07/21 金 19:05</span></div>
</div>
<div class="gr" style="top:636px;height:60px">
<div class="gc " style="left:-1px;width:43px;padding-left:1px"><span class="cb rcb"></span></div>
<div class="gc " style="left:42px;width:34px"><span class="ct">410</span></div>
<div class="gc " style="left:76px;width:342px"><a class="tl">開発支援作業（2023/07）</a><div class="md"><div>クラウド業務連携の開発支援</div></div></div>
<div class="gc " style="left:418px;width:46px"><span class="ct">5)E社</span></div>
<div class="gc " style="left:464px;width:69px"><span class="sb green">発注</span></div>
<div class="gc " style="left:533px;width:100px"><svg class="pi" viewBox="0 0 10.2 9.4" width="10.2" height="9.4"><circle cx="5.1" cy="3.2" r="2.45" fill="#f3deb0" stroke="#d49a05" stroke-width="1.1"/><path d="M0 9.4 L2.4 6.5 L7.8 6.5 L10.2 9.4 Z" fill="#d49a05"/></svg><b class="ow">芝通 邪鬼</b></div>
<div class="gc " style="left:633px;width:192px"><span class="ct">2023/07/31 月</span><span class="rel">7 日後</span></div>
<div class="gc " style="left:825px;width:69px"><span class="sb st green">実</span></div>
<div class="gc " style="left:894px;width:107px"><span class="ct">2023/07/01 土</span></div>
<div class="gc " style="left:1001px;width:107px"><span class="ct"></span></div>
<div class="gc " style="left:1108px;width:65px"><span class="ct">20 日</span><span class="wb" style="width:20px"><i style="width:0px"></i></span></div>
<div class="gc " style="left:1173px;width:65px"><span class="ct redt">0%</span><span class="pb"><i style="width:38px"></i></span></div>
<div class="gc " style="left:1238px;width:70px"><span class="ct">20 日</span></div>
<div class="gc " style="left:1308px;width:53px"></div>
<div class="gc " style="left:1361px;width:86px"><svg class="pi" viewBox="0 0 10.2 9.4" width="10.2" height="9.4"><circle cx="5.1" cy="3.2" r="2.45" fill="#f3deb0" stroke="#d49a05" stroke-width="1.1"/><path d="M0 9.4 L2.4 6.5 L7.8 6.5 L10.2 9.4 Z" fill="#d49a05"/></svg><b class="ow">芝通 平八</b></div>
<div class="gc last" style="left:1447px;width:152px"><span class="ct">2023/07/21 金 19:04</span></div>
</div>
<div class="gr" style="top:696px;height:60px">
<div class="gc " style="left:-1px;width:43px;padding-left:1px"><span class="cb rcb"></span></div>
<div class="gc " style="left:42px;width:34px"><span class="ct">409</span></div>
<div class="gc " style="left:76px;width:342px"><a class="tl">開発支援作業（2023/07）</a><div class="md"><div>クラウド業務連携の開発支援</div></div></div>
<div class="gc " style="left:418px;width:46px"><span class="ct">5)E社</span></div>
<div class="gc " style="left:464px;width:69px"><span class="sb green">発注</span></div>
<div class="gc " style="left:533px;width:100px"><svg class="pi" viewBox="0 0 10.2 9.4" width="10.2" height="9.4"><circle cx="5.1" cy="3.2" r="2.45" fill="#f3deb0" stroke="#d49a05" stroke-width="1.1"/><path d="M0 9.4 L2.4 6.5 L7.8 6.5 L10.2 9.4 Z" fill="#d49a05"/></svg><b class="ow">芝通 月光</b></div>
<div class="gc " style="left:633px;width:192px"><span class="ct">2023/07/31 月</span><span class="rel">7 日後</span></div>
<div class="gc " style="left:825px;width:69px"><span class="sb st green">実</span></div>
<div class="gc " style="left:894px;width:107px"><span class="ct">2023/07/01 土</span></div>
<div class="gc " style="left:1001px;width:107px"><span class="ct"></span></div>
<div class="gc " style="left:1108px;width:65px"><span class="ct">20 日</span><span class="wb" style="width:20px"><i style="width:0px"></i></span></div>
<div class="gc " style="left:1173px;width:65px"><span class="ct redt">0%</span><span class="pb"><i style="width:38px"></i></span></div>
<div class="gc " style="left:1238px;width:70px"><span class="ct">20 日</span></div>
<div class="gc " style="left:1308px;width:53px"></div>
<div class="gc " style="left:1361px;width:86px"><svg class="pi" viewBox="0 0 10.2 9.4" width="10.2" height="9.4"><circle cx="5.1" cy="3.2" r="2.45" fill="#f3deb0" stroke="#d49a05" stroke-width="1.1"/><path d="M0 9.4 L2.4 6.5 L7.8 6.5 L10.2 9.4 Z" fill="#d49a05"/></svg><b class="ow">芝通 平八</b></div>
<div class="gc last" style="left:1447px;width:152px"><span class="ct">2023/07/21 金 19:03</span></div>
</div>
</div>
<div id="cmd">
<span class="btn" style="left:745px;top:9px;width:51px;height:28px"><svg viewBox="0 0 12 12" width="12" height="12" class="bx" style="left:4px;top:7px"><circle cx="6" cy="6" r="5.9" fill="#3a3a42"/><path d="M6 2.8 L2.6 6 L6 9.2 V7.1 H9.2 V4.9 H6 Z" fill="#fedc6c"/></svg><span class="bt">戻<span class="k">る</span></span></span>
<span class="btn" style="left:804px;top:9px;width:75px;height:28px"><svg viewBox="0 0 8.4 10" width="8.4" height="10" class="bx" style="left:6.5px;top:9px"><path d="M0.2 2.1 H8.2 M2.7 1.6 V0.6 H5.7 V1.6" stroke="#2e2e4a" stroke-width="1.2" fill="none"/><path d="M0.9 3.3 H7.5 L7 9.3 Q6.9 10 6.2 10 H2.2 Q1.5 10 1.4 9.3 Z" fill="#2e2e4a"/><path d="M3 4.5 V8.8 M4.2 4.5 V8.8 M5.4 4.5 V8.8" stroke="#fedc6c" stroke-width="0.5"/></svg><span class="bt">一括削除</span></span>
</div>
<div id="foot"><span>Copyright © Implem Inc. 2014 - 2023</span></div>
<div id="sbar"><svg viewBox="0 0 17 17" width="17" height="17" style="position:absolute;left:0;top:0"><path d="M4.9 12.1 L8.6 7.6 L12.3 12.1 Z" fill="#a3a3a3"/></svg><div class="thumb"></div></div>
</body></html>
